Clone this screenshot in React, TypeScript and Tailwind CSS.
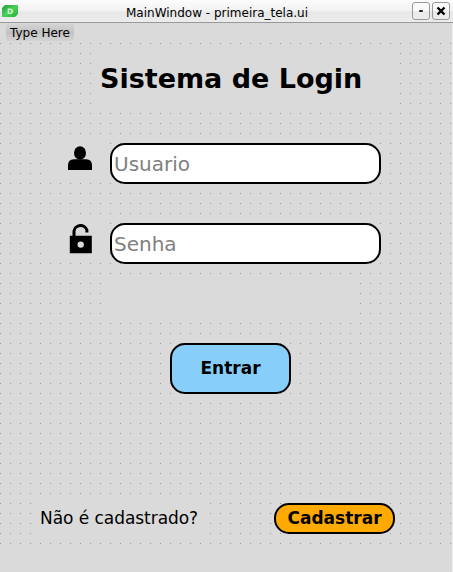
import React from "react";

function Patch({ className }: { className: string }) {
  return <div className={"absolute bg-[#dadada] " + className} />;
}

function TitleBar() {
  return (
    <header className="relative flex h-[23px] items-start justify-between border-b border-[#999] bg-[linear-gradient(to_bottom,#fdfdfd_0px,#f1f1f1_11px,#e7e7e7_12px,#ececec_22px)] pl-[2px] pr-[3px]">
      <svg className="mt-[5px]" width="16" height="12" viewBox="0 0 16 12">
        <defs>
          <linearGradient id="leaf" x1="0" y1="0" x2="1" y2="1">
            <stop offset="0" stopColor="#1f9d35" />
            <stop offset="0.5" stopColor="#4bd05a" />
            <stop offset="1" stopColor="#22b03a" />
          </linearGradient>
        </defs>
        <path d="M3 0H16V9L13 12H0V3Z" fill="url(#leaf)" />
        <text x="5" y="9" fontSize="7.5" fontWeight="bold" fill="#d8f8d8" fontFamily="DejaVu Sans, sans-serif">D</text>
      </svg>
      <h1 className="absolute left-[126px] top-[6px] whitespace-nowrap text-[12px] leading-[15px]">MainWindow - primeira_tela.ui</h1>
      <div className="mt-[2px] flex gap-[2px]">
        <button className="flex h-[18px] w-[18px] items-center justify-center rounded-[3px] border border-[#999] bg-[linear-gradient(#fafafa_50%,#ebebeb_50%)]">
          <span className="h-[2px] w-[4px] rounded-[1px] bg-[#222]" />
        </button>
        <button className="flex h-[18px] w-[18px] items-center justify-center rounded-[3px] border border-[#999] bg-[linear-gradient(#fafafa_50%,#ebebeb_50%)]">
          <svg width="10" height="10" viewBox="0 0 10 10">
            <path d="M1.5 1.5L8.5 8.5M8.5 1.5L1.5 8.5" stroke="#000" strokeWidth="2.4" />
          </svg>
        </button>
      </div>
    </header>
  );
}

function UserIcon() {
  return (
    <svg width="24" height="25" viewBox="0 0 24 25" className="block">
      <ellipse cx="12" cy="7" rx="6" ry="6.7" />
      <path d="M0 24V19.5Q0 13.3 6 13.3H18Q24 13.3 24 19.5V24Z" />
    </svg>
  );
}

function LockIcon() {
  return (
    <svg width="24" height="31" viewBox="0 0 24 31" className="block">
      <path d="M5 14V8.2A6.6 6.4 0 0 1 17.9 7.2V9.6" fill="none" stroke="#000" strokeWidth="3" />
      <path fillRule="evenodd" d="M0.8 12.8H22.8V30.2H0.8ZM11.7 18.4A3.2 3.2 0 1 0 11.7 24.8A3.2 3.2 0 1 0 11.7 18.4Z" />
    </svg>
  );
}

export default function App() {
  return (
    <div className="relative h-[572px] w-[453px] overflow-hidden bg-[#dadada] font-['DejaVu_Sans',sans-serif] text-black">
      <TitleBar />
      <nav className="flex h-[20px] items-start pl-[6px] pt-[1px]">
        <span className="h-[17px] w-[68px] bg-[linear-gradient(#d4d4d4,#c2c2c2_50%,#d4d4d4)] pl-[4px] text-[12px] leading-[19px]">Type Here</span>
      </nav>
      <main className="relative h-[529px]">
        <svg className="absolute left-0 top-0" width="453" height="501" shapeRendering="crispEdges">
          <defs>
            <pattern id="grid" width="10" height="10" patternUnits="userSpaceOnUse">
              <rect width="10" height="10" fill="#dadada" />
              <rect width="1" height="1" fill="#999" />
            </pattern>
          </defs>
          <rect width="453" height="501" fill="url(#grid)" />
        </svg>
        <Patch className="left-[91px] top-[1px] h-[69px] w-[309px]" />
        <Patch className="left-[41px] top-[91px] h-[49px] w-[69px]" />
        <Patch className="left-[41px] top-[171px] h-[49px] w-[69px]" />
        <Patch className="left-[101px] top-[240px] h-[40px] w-[259px]" />
        <Patch className="left-[31px] top-[460px] h-[40px] w-[179px]" />
        <div className="relative">
          <h2 className="ml-[100px] pt-[20px] text-[27px] leading-[32px] font-bold whitespace-nowrap">Sistema de Login</h2>
          <div className="mt-[48px] flex">
            <div className="w-[110px] pl-[68px] pt-[3px]"><UserIcon /></div>
            <input className="h-[41px] w-[271px] rounded-[15px] border-2 border-black bg-white px-[2px] text-[20px] placeholder:text-[#808080]" placeholder="Usuario" />
          </div>
          <div className="mt-[39px] flex">
            <div className="w-[110px] pl-[69px]"><LockIcon /></div>
            <input className="h-[41px] w-[271px] rounded-[15px] border-2 border-black bg-white px-[2px] text-[20px] placeholder:text-[#808080]" placeholder="Senha" />
          </div>
          <button className="ml-[170px] mt-[79px] block h-[51px] w-[121px] rounded-[15px] border-2 border-black bg-[#87cefa] text-[17px] font-bold">Entrar</button>
          <div className="mt-[109px] flex items-center">
            <span className="w-[234px] pl-[40px] text-[17px] tracking-[-0.05px] whitespace-nowrap">Não é cadastrado?</span>
            <button className="ml-[40px] h-[31px] w-[121px] rounded-[15px] border-2 border-black bg-[#ffaa00] text-[17px] leading-[27px] font-bold">Cadastrar</button>
          </div>
        </div>
      </main>
      <div className="absolute bottom-0 right-0 top-[23px] w-px bg-[#eee]" />
    </div>
  );
}
